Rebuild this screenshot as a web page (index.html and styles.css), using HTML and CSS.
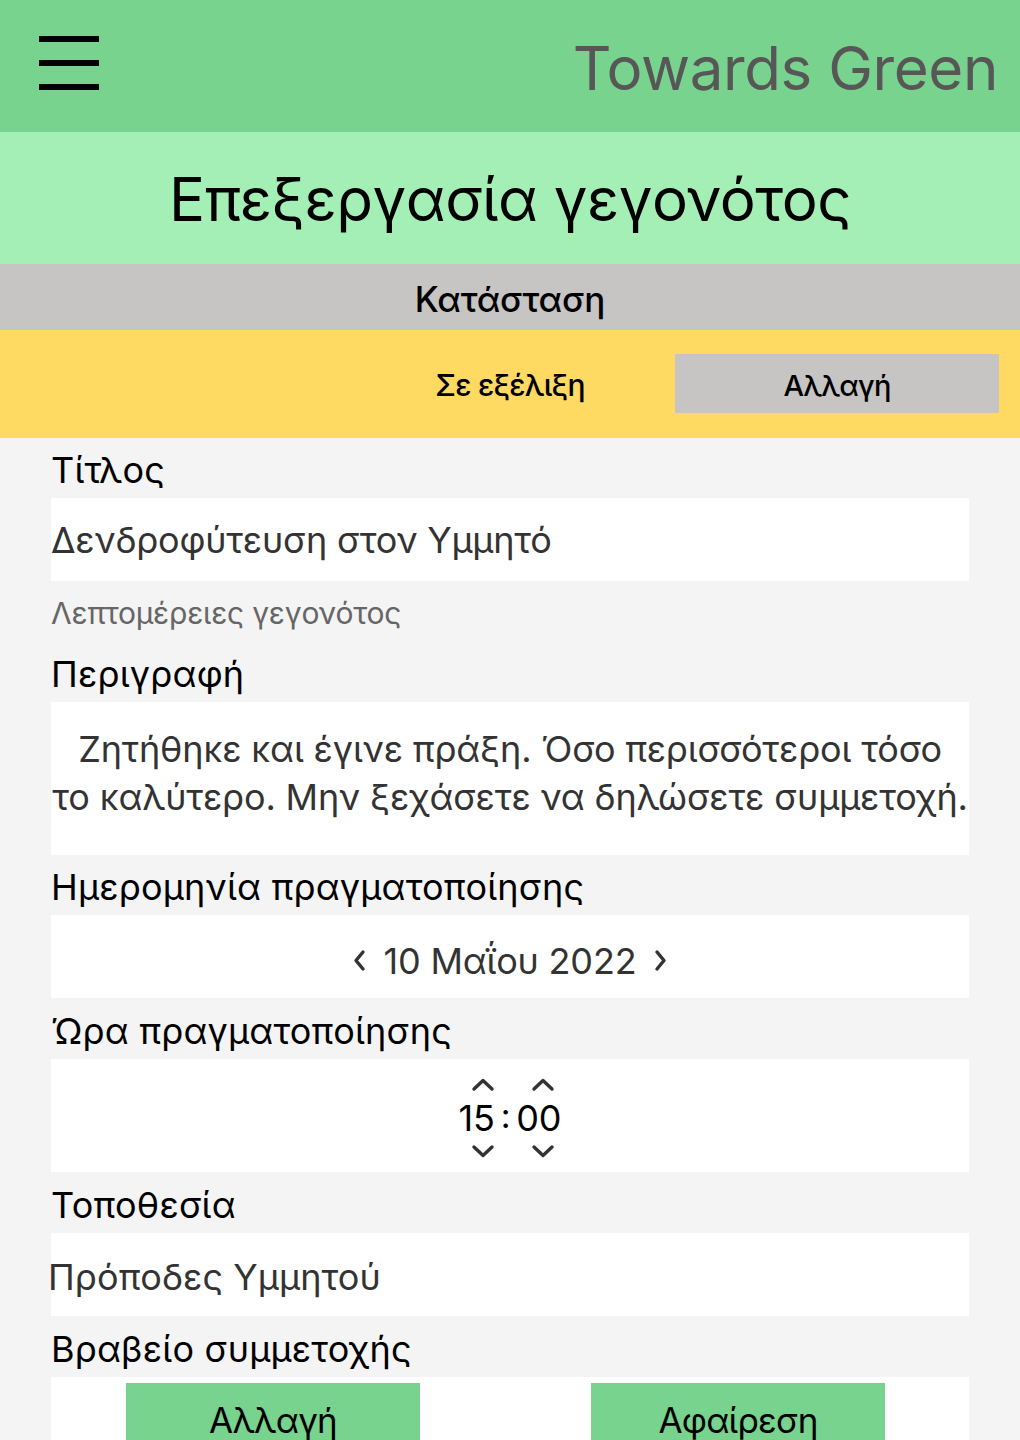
FILE: index.html
```html
<!DOCTYPE html>
<html lang="el">
<head>
<meta charset="utf-8">
<link rel="stylesheet" href="styles.css">
<title>Towards Green</title>
</head>
<body>
<header class="topbar">
  <div class="burger"><span></span><span></span><span></span></div>
  <div class="brand">Towards Green</div>
</header>
<div class="page-title">Επεξεργασία γεγονότος</div>
<div class="status-head">Κατάσταση</div>
<div class="status-row">
  <div class="status-value">Σε εξέλιξη</div>
  <button class="status-btn">Αλλαγή</button>
</div>
<main class="form">
  <div class="label">Τίτλος</div>
  <div class="field field-left">Δενδροφύτευση στον Υμμητό</div>
  <div class="sub">Λεπτομέρειες γεγονότος</div>
  <div class="label">Περιγραφή</div>
  <div class="field area">Ζητήθηκε και έγινε πράξη. Όσο περισσότεροι τόσο<br>το καλύτερο. Μην ξεχάσετε να δηλώσετε συμμετοχή.</div>
  <div class="label">Ημερομηνία πραγματοποίησης</div>
  <div class="field date">
    <svg class="chev" width="16" height="24" viewBox="0 0 16 24"><polyline points="11,3 4,11.5 11,20" fill="none" stroke="#333" stroke-width="3.4" stroke-linecap="round" stroke-linejoin="round"/></svg>
    <span class="date-text">10 Μαΐου 2022</span>
    <svg class="chev" width="16" height="24" viewBox="0 0 16 24"><polyline points="5,3 12,11.5 5,20" fill="none" stroke="#333" stroke-width="3.4" stroke-linecap="round" stroke-linejoin="round"/></svg>
  </div>
  <div class="label">Ώρα πραγματοποίησης</div>
  <div class="field time">
    <div class="tcol tcol-h">
      <svg width="24" height="14" viewBox="0 0 24 14"><polyline points="3,11 12,2.5 21,11" fill="none" stroke="#333" stroke-width="3.4" stroke-linecap="round" stroke-linejoin="round"/></svg>
      <span class="tnum">15</span>
      <svg width="24" height="14" viewBox="0 0 24 14"><polyline points="3,3 12,11.5 21,3" fill="none" stroke="#333" stroke-width="3.4" stroke-linecap="round" stroke-linejoin="round"/></svg>
    </div>
    <span class="tsep">:</span>
    <div class="tcol tcol-m">
      <svg width="24" height="14" viewBox="0 0 24 14"><polyline points="3,11 12,2.5 21,11" fill="none" stroke="#333" stroke-width="3.4" stroke-linecap="round" stroke-linejoin="round"/></svg>
      <span class="tnum">00</span>
      <svg width="24" height="14" viewBox="0 0 24 14"><polyline points="3,3 12,11.5 21,3" fill="none" stroke="#333" stroke-width="3.4" stroke-linecap="round" stroke-linejoin="round"/></svg>
    </div>
  </div>
  <div class="label">Τοποθεσία</div>
  <div class="field field-left loc"><span class="loc-text">Πρόποδες Υμμητού</span></div>
  <div class="label">Βραβείο συμμετοχής</div>
  <div class="field prize">
    <button class="gbtn">Αλλαγή</button>
    <button class="gbtn">Αφαίρεση</button>
  </div>
</main>
</body>
</html>
```
FILE: styles.css
```css
* { box-sizing: border-box; }
html, body { margin: 0; padding: 0; }
body {
  background: #f4f4f4;
  font-family: "Inter", "Noto Sans", sans-serif;
  color: #000;
  width: 1020px;
  height: 1440px;
  overflow: hidden;
}
.topbar {
  height: 132px;
  background: #77d38d;
  display: flex;
  align-items: center;
  justify-content: space-between;
  padding: 0 22px 0 39px;
}
.burger {
  display: flex;
  flex-direction: column;
  gap: 18px;
  width: 60px;
  margin-top: -6px;
}
.burger span {
  display: block;
  height: 6px;
  background: #000;
}
.brand {
  font-size: 60px;
  color: #575757;
  letter-spacing: -0.4px;
  margin-top: 4px;
}
.page-title {
  height: 132px;
  background: #a4efb6;
  display: flex;
  align-items: center;
  justify-content: center;
  font-size: 60px;
  letter-spacing: -0.5px;
  padding-top: 2px;
}
.status-head {
  height: 66px;
  background: #c6c5c3;
  display: flex;
  align-items: center;
  justify-content: center;
  font-size: 35px;
  font-weight: 500;
  letter-spacing: -0.2px;
  padding-top: 4px;
}
.status-row {
  height: 108px;
  background: #ffda62;
  position: relative;
  display: flex;
  align-items: center;
  justify-content: center;
}
.status-value {
  font-size: 30px;
  letter-spacing: -0.8px;
  font-weight: 500;
  padding-top: 2px;
}
.status-btn {
  position: absolute;
  left: 675px;
  top: 24px;
  width: 324px;
  height: 59px;
  border: 0;
  background: #c6c5c3;
  font-family: inherit;
  font-size: 29px;
  font-weight: 500;
  letter-spacing: -0.8px;
  color: #000;
  padding-top: 4px;
}
.form {
  padding: 10px 51px 0 51px;
  display: flex;
  flex-direction: column;
}
.label {
  font-size: 36px;
  letter-spacing: 0.2px;
  line-height: 44px;
  margin-bottom: 6px;
}
.field {
  background: #fff;
  font-size: 36px;
  color: #333;
  letter-spacing: -0.2px;
}
.field-left {
  height: 83px;
  display: flex;
  align-items: center;
}
.sub {
  font-size: 30px;
  color: #666;
  letter-spacing: -0.2px;
  line-height: 40px;
  margin: 12px 0 19px;
}
.area {
  height: 153px;
  text-align: center;
  line-height: 48px;
  padding: 23px 0 0;
  margin-bottom: 10px;
  letter-spacing: -0.15px;
  white-space: nowrap;
}
.date {
  height: 83px;
  display: flex;
  align-items: center;
  justify-content: center;
  gap: 16px;
  margin-bottom: 11px;
  padding-top: 8px;
}
.loc { margin-bottom: 11px; padding-top: 4px; letter-spacing: 0.1px; }
.loc-text { margin-left: -3px; }
.time {
  height: 113px;
  display: flex;
  align-items: center;
  justify-content: center;
  gap: 6px;
  margin-bottom: 11px;
  color: #000;
  padding-top: 4px;
}
.tcol {
  display: flex;
  flex-direction: column;
  align-items: center;
}
.tcol-h svg { margin-left: 12px; }
.tcol-m svg { margin-left: 8px; }
.tnum { font-size: 36px; line-height: 52px; }
.tsep { font-size: 34px; padding-bottom: 4px; }
.prize {
  height: 80px;
  display: flex;
  justify-content: space-between;
  padding: 6px 84px 0 75px;
  align-items: flex-start;
}
.gbtn {
  width: 294px;
  height: 80px;
  border: 0;
  background: #77d38d;
  font-family: inherit;
  font-size: 35px;
  color: #000;
  letter-spacing: -0.8px;
  padding: 16px 0 0;
  display: flex;
  justify-content: center;
  align-items: flex-start;
}
```
